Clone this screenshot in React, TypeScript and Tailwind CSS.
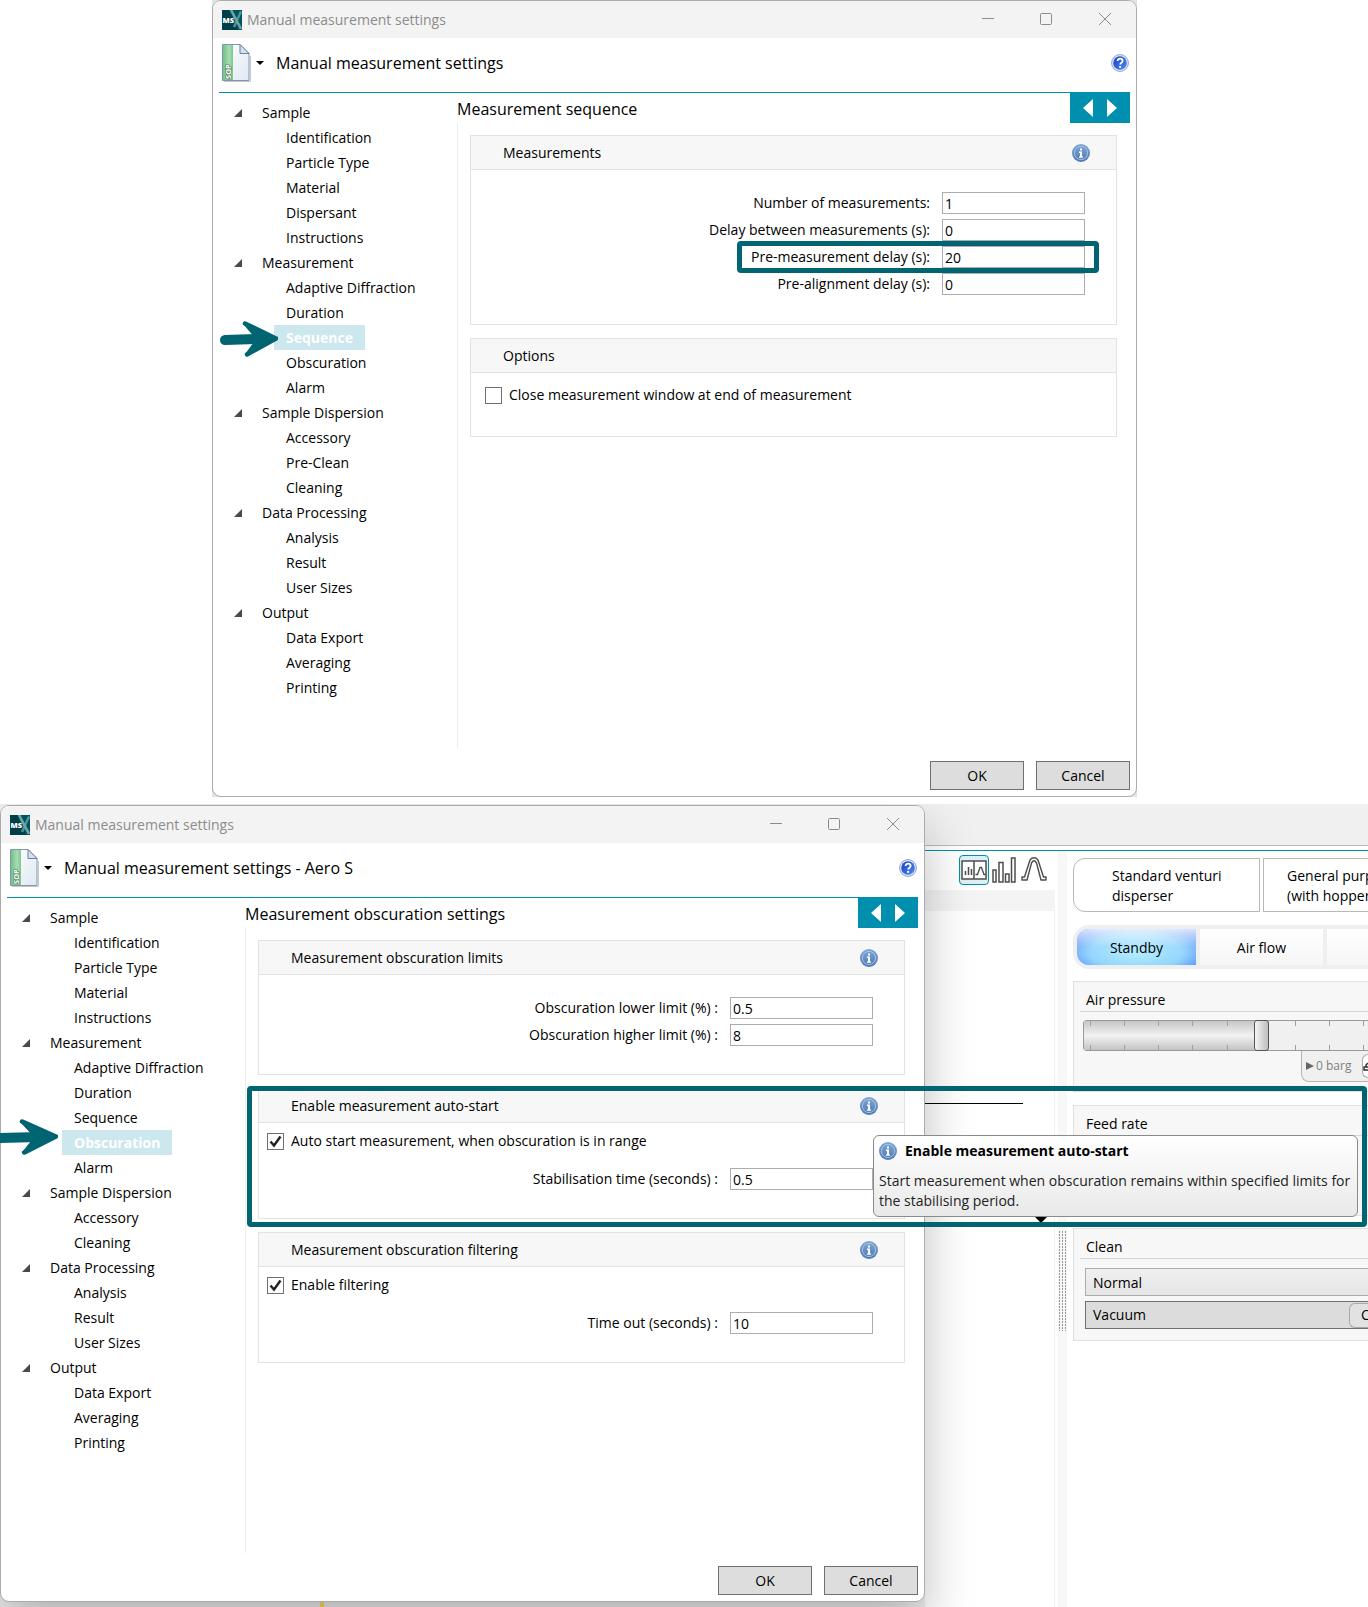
import { useId, type ReactNode } from "react";
import { clsx } from "clsx";

interface TreeGroup {
  label: string;
  items: string[];
}

const sequenceTree: TreeGroup[] = [
  { label: "Sample", items: ["Identification", "Particle Type", "Material", "Dispersant", "Instructions"] },
  { label: "Measurement", items: ["Adaptive Diffraction", "Duration", "Sequence", "Obscuration", "Alarm"] },
  { label: "Sample Dispersion", items: ["Accessory", "Pre-Clean", "Cleaning"] },
  { label: "Data Processing", items: ["Analysis", "Result", "User Sizes"] },
  { label: "Output", items: ["Data Export", "Averaging", "Printing"] },
];

const obscurationTree: TreeGroup[] = [
  { label: "Sample", items: ["Identification", "Particle Type", "Material", "Instructions"] },
  { label: "Measurement", items: ["Adaptive Diffraction", "Duration", "Sequence", "Obscuration", "Alarm"] },
  { label: "Sample Dispersion", items: ["Accessory", "Cleaning"] },
  { label: "Data Processing", items: ["Analysis", "Result", "User Sizes"] },
  { label: "Output", items: ["Data Export", "Averaging", "Printing"] },
];

function AppLogo() {
  return (
    <svg viewBox="0 0 20 20" className="size-5 shrink-0">
      <rect width="20" height="20" fill="#003f49" />
      <path d="M7 0h13v20h-4z" fill="#00525c" />
      <path d="M19 1.500 12 17" stroke="#4f9499" strokeWidth="2.4" />
      <path d="M9 0 19 19" stroke="#6fa5a9" strokeWidth="2.6" />
      <text x="0.5" y="12.5" fontSize="7.500" fontWeight="800" fill="#fff" fontFamily="Open Sans, sans-serif">MS</text>
    </svg>
  );
}

function SopIcon() {
  const id = useId();
  return (
    <svg viewBox="0 0 29 38" className="h-[38px] w-[29px] shrink-0">
      <defs>
        <linearGradient id={`${id}g`} x1="0" x2="1">
          <stop offset="0" stopColor="#6fc283" />
          <stop offset="0.6" stopColor="#a9dcb3" />
          <stop offset="1" stopColor="#7cc98e" />
        </linearGradient>
        <linearGradient id={`${id}p`} x1="0" x2="1" y1="0" y2="1">
          <stop offset="0" stopColor="#ffffff" />
          <stop offset="1" stopColor="#dfe8f2" />
        </linearGradient>
      </defs>
      <path d="M2 37.5h26.5V12" fill="none" stroke="#c3c7cc" />
      <path d="M.5.5h17.5l9 9V36.500H.5z" fill={`url(#${id}p)`} stroke="#8296ad" />
      <path d="M1 1h10v35H1z" fill={`url(#${id}g)`} />
      <path d="M18 .5v9h9z" fill="#d5e1ee" stroke="#6b819c" />
      <text transform="translate(9 35) rotate(-90)" fontSize="7.500" fontWeight="700" fill="#fff" stroke="#5b8f68" strokeWidth="1.6" paintOrder="stroke" fontFamily="Open Sans, sans-serif">
        SOP
      </text>
    </svg>
  );
}

function InfoIcon() {
  const id = useId();
  return (
    <svg viewBox="0 0 18 18" className="size-[18px] shrink-0">
      <defs>
        <linearGradient id={id} x1="0" x2="0" y1="0" y2="1">
          <stop offset="0" stopColor="#7fa8d6" />
          <stop offset="1" stopColor="#4f79b4" />
        </linearGradient>
      </defs>
      <circle cx="9" cy="9" r="9" fill={`url(#${id})`} />
      <circle cx="9" cy="9" r="6.600" fill="none" stroke="#b3cdec" strokeWidth="0.8" />
      <path d="M8 4.500h2v2H8zM7 7.500h3v5h1v1.300H7v-1.300h1V9H7z" fill="#fff" />
    </svg>
  );
}

function HelpIcon() {
  const id = useId();
  return (
    <svg viewBox="0 0 18 18" className="size-[18px]">
      <defs>
        <linearGradient id={id} x1="0" x2="1" y1="0" y2="1">
          <stop offset="0" stopColor="#1a3bc0" />
          <stop offset="1" stopColor="#4f8cf5" />
        </linearGradient>
      </defs>
      <circle cx="9" cy="9" r="8.400" fill="#dfe8f8" stroke="#8ba3cf" />
      <circle cx="9" cy="9" r="6.800" fill={`url(#${id})`} />
      <path d="M6.600 7c0-3.200 5-3.100 5 0 0 1.700-2.400 1.700-2.400 3.600" fill="none" stroke="#fff" strokeWidth="1.8" />
      <circle cx="9.100" cy="12.900" r="1.100" fill="#fff" />
    </svg>
  );
}

function Arrow({ className }: { className: string }) {
  return (
    <svg viewBox="0 0 58 36" preserveAspectRatio="none" className={clsx("absolute h-9", className)} fill="none" stroke="#006471" strokeLinecap="round" strokeLinejoin="round">
      <path d="M5 19 40 18" strokeWidth="10" />
      <path d="M25 2.500 56 17.500 27 33.500" strokeWidth="4.500" />
      <path d="M25 3 56 17.500 27 33 38 18z" fill="#006471" strokeWidth="3" />
    </svg>
  );
}

function Tree({ groups, selected, arrow }: { groups: TreeGroup[]; selected: string; arrow: string }) {
  return (
    <nav className="w-[238px] shrink-0 pt-[7px]">
      {groups.map((group) => (
        <div key={group.label}>
          <button className="flex h-[25px] items-center pt-px pl-[15px]">
            <svg viewBox="0 0 8 8" className="mr-5 size-2">
              <path d="M8 0v8H0z" fill="#4a4a4a" />
            </svg>
            {group.label}
          </button>
          <ul>
            {group.items.map((item) => (
              <li key={item} className="flex h-[25px] pl-[55px]">
                <button
                  className={clsx(
                    "relative flex items-center px-3 pt-px",
                    item === selected && "bg-[#cce7ee] font-bold text-white"
                  )}
                >
                  {item}
                  {item === selected && <Arrow className={arrow} />}
                </button>
              </li>
            ))}
          </ul>
        </div>
      ))}
    </nav>
  );
}

function Panel({ title, info, className, children }: { title: string; info?: boolean; className?: string; children: ReactNode }) {
  return (
    <section className={clsx("relative border border-[#e2e2e2]", className)}>
      <header className="flex h-[34px] items-center justify-between border-b border-[#e2e2e2] bg-[#f7f7f7] pr-[26px] pl-8">
        <h3 className="pt-px">{title}</h3>
        {info && (
          <button aria-label={`About ${title}`}>
            <InfoIcon />
          </button>
        )}
      </header>
      {children}
    </section>
  );
}

function Field({ label, value, marked }: { label: string; value: string; marked?: boolean }) {
  return (
    <div className="flex justify-end pr-[31px]">
      <label className="relative flex h-[22px] items-center gap-3">
        {label}
        <input defaultValue={value} className="h-[22px] w-[143px] border border-[#abadb3] bg-white px-[2px] outline-none" />
        {marked && (
          <span className="pointer-events-none absolute -inset-y-[5px] -right-[14px] -left-[14px] rounded border-[5px] border-[#006471]" />
        )}
      </label>
    </div>
  );
}

function CheckField({ label, checked, className }: { label: string; checked?: boolean; className?: string }) {
  return (
    <label className={clsx("flex items-center gap-[7px]", className)}>
      <span className="relative flex">
        <input type="checkbox" defaultChecked={checked} className="peer size-[17px] appearance-none border border-[#707070] bg-white" />
        <svg viewBox="0 0 17 17" className="pointer-events-none absolute inset-0 hidden size-[17px] peer-checked:block">
          <path d="M3.500 8.500 7 12.500 13.500 3.500" fill="none" stroke="#212121" strokeWidth="2.400" />
        </svg>
      </span>
      {label}
    </label>
  );
}

interface SettingsWindowProps {
  title: string;
  heading: string;
  groups: TreeGroup[];
  selected: string;
  arrow: string;
  shadow?: boolean;
  children: ReactNode;
}

function SettingsWindow({ title, heading, groups, selected, arrow, shadow, children }: SettingsWindowProps) {
  return (
    <div
      className={clsx(
        "flex flex-col rounded-[9px] border border-[#ababab] bg-white",
        shadow && "shadow-[0_24px_50px_rgba(0,0,0,0.26)]"
      )}
    >
      <div className="flex h-[37px] items-center rounded-t-lg bg-[#f3f3f3] pr-px pl-[9px] text-[#8c8c8c]">
        <AppLogo />
        <span className="grow pl-[5px]">Manual measurement settings</span>
        <button aria-label="Minimize" className="flex w-[58px] justify-center pb-px">
          <svg viewBox="0 0 12 12" className="size-3" stroke="#8c8c8c"><path d="M0 5.500h12" /></svg>
        </button>
        <button aria-label="Maximize" className="flex w-[58px] justify-center pb-px">
          <svg viewBox="0 0 12 12" className="size-3" stroke="#8c8c8c" fill="none"><rect x="0.500" y="0.500" width="11" height="11" rx="1" /></svg>
        </button>
        <button aria-label="Close" className="flex w-[60px] justify-center pb-px">
          <svg viewBox="0 0 12 12" className="size-3" stroke="#8c8c8c"><path d="M0 0 12 12M12 0 0 12" /></svg>
        </button>
      </div>

      <div className="flex h-[54px] items-center pr-[7px] pb-[5px] pl-[9px]">
        <button aria-label="SOP menu" className="flex items-center">
          <SopIcon />
          <svg viewBox="0 0 8 4" className="ml-[5px] h-1 w-2"><path d="M0 0h8L4 4z" /></svg>
        </button>
        <h1 className="grow pl-3 text-base">{title}</h1>
        <button aria-label="Help">
          <HelpIcon />
        </button>
      </div>

      <div className="mx-[6px] flex min-h-[656px] border-t border-[#008fae]">
        <Tree groups={groups} selected={selected} arrow={arrow} />
        <div className="flex grow flex-col">
          <div className="flex h-[30px] justify-between">
            <h2 className="pt-1 text-base">{heading}</h2>
            <div className="flex w-[60px] items-center justify-center gap-[14px] bg-[#008fae]">
              <button aria-label="Previous">
                <svg viewBox="0 0 10 18" className="h-[18px] w-[10px]" fill="#fff"><path d="M10 0v18L0 9z" /></svg>
              </button>
              <button aria-label="Next">
                <svg viewBox="0 0 10 18" className="h-[18px] w-[10px]" fill="#fff"><path d="M0 0v18l10-9z" /></svg>
              </button>
            </div>
          </div>
          <div className="flex grow flex-col gap-[13px] border-l border-[#ededed] pt-3 pr-[13px] pl-3">{children}</div>
        </div>
      </div>

      <div className="flex justify-end gap-3 px-[6px] pt-[13px] pb-[6px]">
        <button className="h-[29px] w-[94px] border border-[#707070] bg-[#dddddd] pt-px">OK</button>
        <button className="h-[29px] w-[94px] border border-[#707070] bg-[#dddddd] pt-px">Cancel</button>
      </div>
    </div>
  );
}

function Tooltip() {
  return (
    <div
      role="tooltip"
      className="absolute top-[46px] left-4/4 -ml-[31px] flex w-[485px] flex-col gap-[10px] rounded-md border border-[#8a8a8a] bg-linear-to-b from-white to-[#e9e9ea] py-[5px] pl-[5px] text-[#222]"
    >
      <p className="flex items-center gap-2 leading-5 font-bold text-black">
        <InfoIcon />
        Enable measurement auto-start
      </p>
      <p className="leading-5">Start measurement when obscuration remains within specified limits for the stabilising period.</p>
    </div>
  );
}

function ChartColumn() {
  return (
    <div className="flex w-[130px] shrink-0 flex-col pt-1">
      <div className="flex h-[35px] items-start gap-[3px] pl-[34px]">
        <button aria-label="Split view" className="flex h-[30px] w-[30px] items-center justify-center rounded-sm border border-[#008fae] bg-[#dff0f4]">
          <svg viewBox="0 0 26 20" className="h-5 w-[26px]" fill="none" stroke="#4d4d4d">
            <rect x="1" y="1" width="24" height="18" fill="#fff" strokeWidth="1.500" />
            <path d="M13 1v18M4.500 15v-4M7.500 15V7M10.500 15V9" strokeWidth="1.500" />
            <path d="M14.500 14.500h2l2.500-7h1.500l2.500 7h1.500" strokeWidth="1.300" />
          </svg>
        </button>
        <button aria-label="Histogram" className="pt-[2px]">
          <svg viewBox="0 0 24 26" className="h-[26px] w-6" fill="#fff" stroke="#4d4d4d" strokeWidth="1.500">
            <path d="M1 13h3v12H1zM7 5.500h4V25H7zM13.500 17h3.500v8h-3.500zM19.500 1H23v24h-3.500z" />
          </svg>
        </button>
        <button aria-label="Distribution curve" className="pt-[2px] pl-[2px]">
          <svg viewBox="0 0 26 24" className="h-6 w-[26px]" fill="#fff" stroke="#4d4d4d" strokeWidth="1.400" strokeLinejoin="round">
            <path d="M1 23v-3h2.500L9 3l2-2h4l2 2 5.500 17H25v3h-5L15.500 6 14 4h-2l-1.500 2L6 23z" />
          </svg>
        </button>
      </div>
      <div className="h-[21px] bg-[#f4f4f4]" />
      <div className="grow border-r border-[#f1f1f1] pt-[192px]">
        <div className="w-[98px] border-t border-black" />
        <svg viewBox="0 0 14 7" className="mt-[112px] ml-[109px] h-[7px] w-[14px]"><path d="M0 0h14L7 7z" /></svg>
      </div>
    </div>
  );
}

function ControlCard({ title, className, children }: { title: string; className?: string; children?: ReactNode }) {
  return (
    <section className={clsx("border border-r-0 border-[#e0e0e0] bg-[#f7f7f7] pl-[6px]", className)}>
      <h3 className="flex h-[30px] items-end border-b border-[#d6d6d6] pb-px pl-[6px]">{title}</h3>
      {children}
    </section>
  );
}

function PressureSlider() {
  return (
    <div className="relative mt-2 ml-[3px] flex h-[31px] rounded-l-sm border border-r-0 border-[#9a9a9a] bg-[#f0f0f0]">
      <div className="w-[170px] bg-linear-to-b from-[#c6c6c6] via-[#f2f2f2] to-[#c4c4c4]" />
      <svg className="absolute inset-0 h-[29px] w-full" stroke="#a0a0a0">
        {[7, 41, 75, 109, 144, 212, 246, 280].map((x) => (
          <path key={x} d={`M${x - 1}.5 0v5M${x - 1}.5 24v5`} />
        ))}
      </svg>
      <button aria-label="Air pressure" className="relative -my-px w-[15px] rounded-[3px] border border-[#555] bg-linear-to-r from-[#f4f4f4] to-[#bdbdbd]" />
    </div>
  );
}

function AccessoryColumn() {
  return (
    <div className="ml-[6px] w-[295px] shrink-0 overflow-hidden pt-[7px]">
      <div className="flex w-[400px] gap-[3px]">
        <button className="h-[54px] w-[187px] rounded-l-[12px] border border-[#b8b8b8] pt-px pl-[38px] text-left leading-5">
          Standard venturi
          <br />
          disperser
        </button>
        <button className="h-[54px] w-[187px] border border-[#b8b8b8] pt-px pl-[23px] text-left leading-5">
          General purpose
          <br />
          (with hopper)
        </button>
      </div>

      <div className="mt-[13px] flex h-11 w-[400px] gap-1 rounded-l-2xl border-4 border-[#efefef] bg-[#efefef]">
        <button className="w-[119px] rounded-l-xl bg-[radial-gradient(ellipse_at_50%_65%,#b0ecff_0%,#8fd4fd_55%,#4070fa_100%)]">
          <span className="flex h-full items-center justify-center rounded-l-xl bg-linear-to-b from-white/80 via-white/10 via-50% to-transparent pt-px">Standby</span>
        </button>
        <button className="w-[123px] bg-linear-to-b from-white to-[#f6f6f6] pt-px">Air flow</button>
        <span className="grow bg-linear-to-b from-white to-[#f6f6f6]" />
      </div>

      <ControlCard title="Air pressure" className="mt-3 h-[111px]">
        <PressureSlider />
        <div className="-mt-px ml-[221px] flex h-8 items-center rounded-bl-lg border border-r-0 border-[#b5b5b5] bg-[#f0f0f0] pl-1 text-xs whitespace-nowrap text-[#808080]">
          <svg viewBox="0 0 8 8" className="mr-[2px] size-2" fill="#666"><path d="M0 0v8l8-4z" /></svg>
          0 barg
          <button aria-label="Lock pressure" className="ml-auto flex h-6 w-[6px] items-center rounded-l-md border border-r-0 border-[#aaa] bg-white">
            <svg viewBox="0 0 5 10" className="h-[10px] w-[5px]" fill="none" stroke="#333" strokeWidth="1.500"><path d="M5 2 3 4v2M5 6H1v3h4" /></svg>
          </button>
        </div>
      </ControlCard>

      <ControlCard title="Feed rate" className="mt-[13px] h-[111px]" />

      <ControlCard title="Clean" className="mt-3 h-[113px]">
        <div className="mt-[9px] ml-[5px] flex flex-col gap-[5px]">
          <button className="h-7 border border-r-0 border-[#acacac] bg-linear-to-b from-[#f0f0f0] to-[#e5e5e5] pt-px pl-[7px] text-left">Normal</button>
          <div className="flex h-7 items-center justify-between border border-r-0 border-[#707070] bg-[#dcdcdc] pl-[7px]">
            Vacuum
            <button className="h-[25px] w-[19px] rounded-l-md border border-r-0 border-[#a8a8a8] bg-[#e2e2e2] pl-[11px] text-left">C</button>
          </div>
        </div>
      </ControlCard>
    </div>
  );
}

export default function App() {
  return (
    <main className="min-h-screen overflow-hidden bg-white font-['Open_Sans','Noto_Sans',sans-serif] text-sm text-black">
      <div className="pr-[231px] pb-[7px] pl-[212px]">
        <div className="bg-[#e2e2e2]">
          <SettingsWindow
            title="Manual measurement settings"
            heading="Measurement sequence"
            groups={sequenceTree}
            selected="Sequence"
            arrow="top-[-4px] left-[-54px] w-[58px]"
          >
            <Panel title="Measurements" info className="min-h-[190px]">
              <div className="flex flex-col gap-[5px] pt-[22px]">
                <Field label="Number of measurements:" value="1" />
                <Field label="Delay between measurements (s):" value="0" />
                <Field label="Pre-measurement delay (s):" value="20" marked />
                <Field label="Pre-alignment delay (s):" value="0" />
              </div>
            </Panel>
            <Panel title="Options" className="min-h-[99px]">
              <CheckField label="Close measurement window at end of measurement" className="pt-3 pl-[14px]" />
            </Panel>
          </SettingsWindow>
        </div>
      </div>

      <div className="flex min-h-[803px] overflow-hidden">
        <div className="relative z-10 min-w-0 grow bg-[#f0f0f0] pt-px">
          <SettingsWindow
            title="Manual measurement settings - Aero S"
            heading="Measurement obscuration settings"
            groups={obscurationTree}
            selected="Obscuration"
            arrow="top-[-11px] left-[-67px] w-[63px]"
            shadow
          >
            <Panel title="Measurement obscuration limits" info className="min-h-[135px]">
              <div className="flex flex-col gap-[5px] pt-[22px]">
                <Field label="Obscuration lower limit (%) :" value="0.5" />
                <Field label="Obscuration higher limit (%) :" value="8" />
              </div>
            </Panel>
            <Panel title="Enable measurement auto-start" info className="min-h-[131px]">
              <CheckField label="Auto start measurement, when obscuration is in range" checked className="pt-2 pb-[17px] pl-2" />
              <Field label="Stabilisation time (seconds) :" value="0.5" />
              <Tooltip />
              <span className="pointer-events-none absolute -top-[3px] -right-[463px] -bottom-[9px] -left-3 rounded border-[5px] border-[#006471]" />
            </Panel>
            <Panel title="Measurement obscuration filtering" info className="min-h-[131px]">
              <CheckField label="Enable filtering" checked className="pt-2 pb-[17px] pl-2" />
              <Field label="Time out (seconds) :" value="10" />
            </Panel>
          </SettingsWindow>
          <div className="ml-[320px] h-[5px] w-1 bg-[#cfae52]" />
        </div>

        <aside className="flex w-[443px] shrink-0 flex-col overflow-hidden">
          <div className="h-[42px] border-b border-[#bababa] bg-[#f0f0f0]" />
          <div className="mt-1 flex grow border-t border-[#008fae]">
            <ChartColumn />
            <div className="ml-[3px] w-[9px] shrink-0 bg-[#f7f7f7] pt-[380px]">
              <div className="ml-px flex h-[100px] gap-[2px]">
                {[0, 1, 2].map((i) => (
                  <span key={i} className="w-px bg-[repeating-linear-gradient(to_bottom,#999_0_2px,transparent_2px_3px)]" />
                ))}
              </div>
            </div>
            <AccessoryColumn />
          </div>
        </aside>
      </div>
    </main>
  );
}
